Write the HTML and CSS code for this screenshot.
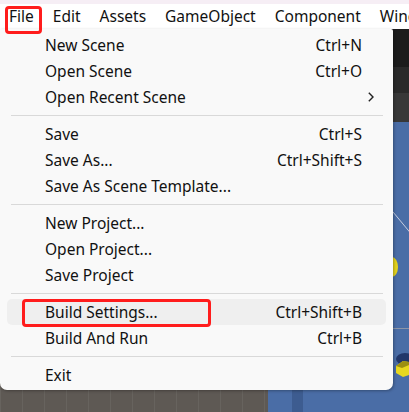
FILE: index.html
```html
<!DOCTYPE html>
<html>
<head>
<meta charset="utf-8">
<link rel="stylesheet" href="styles.css">
</head>
<body>
<div class="app">
  <div class="titlestrip"></div>
  <div class="menubar">
    <div class="mb-item mb-file">File<span class="annot annot-file"></span></div>
    <div class="mb-item">Edit</div>
    <div class="mb-item">Assets</div>
    <div class="mb-item">GameObject</div>
    <div class="mb-item">Component</div>
    <div class="mb-item">Window</div>
  </div>
  <div class="workspace">
    <div class="toolbar tb1"></div>
    <div class="toolbar tb2"></div>
    <div class="toolbar tb3"></div>
    <div class="scene">
      <div class="scene-left"></div>
      <div class="scene-right">
        <div class="scene-strip"></div>
        <svg class="gizmos" width="141" height="290" viewBox="0 0 141 290">
          <line x1="120" y1="84" x2="150" y2="120" stroke="#c6cee0" stroke-width="1"/>
          <ellipse cx="124" cy="145" rx="6" ry="10" fill="#e4d31c"/>
          <line x1="0" y1="206.5" x2="141" y2="206.5" stroke="#8c95a7" stroke-width="1"/>
          <ellipse cx="137" cy="237" rx="9" ry="6" fill="#22376a"/>
          <polygon points="128,244 135,239 141,240 141,253 135,255 128,251" fill="#e8d81e"/>
          <polygon points="128,244 135,239 141,240 141,243 134,246" fill="#9c8f12"/>
        </svg>
      </div>
    </div>
  </div>

  <div class="menu">
    <div class="row"><span class="label">New Scene</span><span class="key">Ctrl+N</span></div>
    <div class="row"><span class="label">Open Scene</span><span class="key">Ctrl+O</span></div>
    <div class="row"><span class="label">Open Recent Scene</span>
      <svg class="chev" width="6" height="10" viewBox="0 0 6 10"><path d="M0.8 0.8 L5 5 L0.8 9.2" fill="none" stroke="#222" stroke-width="1.4"/></svg>
    </div>
    <div class="sep"></div>
    <div class="row"><span class="label">Save</span><span class="key">Ctrl+S</span></div>
    <div class="row"><span class="label">Save As...</span><span class="key">Ctrl+Shift+S</span></div>
    <div class="row"><span class="label">Save As Scene Template...</span></div>
    <div class="sep"></div>
    <div class="row"><span class="label">New Project...</span></div>
    <div class="row"><span class="label">Open Project...</span></div>
    <div class="row"><span class="label">Save Project</span></div>
    <div class="sep"></div>
    <div class="row row-hover"><span class="label">Build Settings...</span><span class="key">Ctrl+Shift+B</span><span class="annot annot-build"></span></div>
    <div class="row"><span class="label">Build And Run</span><span class="key">Ctrl+B</span></div>
    <div class="sep"></div>
    <div class="row"><span class="label">Exit</span></div>
  </div>
</div>
</body>
</html>
```

FILE: styles.css
```css
html, body {
  margin: 0;
  padding: 0;
}
body {
  width: 409px;
  height: 412px;
  overflow: hidden;
  font-family: "Noto Sans", "Open Sans", sans-serif;
  color: #111;
}
.app {
  position: relative;
  width: 409px;
  height: 412px;
  overflow: hidden;
  display: flex;
  flex-direction: column;
}
.titlestrip {
  height: 4px;
  background: #f6eef5;
}
.menubar {
  height: 25px;
  background: #ffffff;
  display: flex;
  align-items: center;
  white-space: nowrap;
  font-size: 15.5px;
}
.mb-item {
  position: relative;
  padding: 0 9.5px;
  line-height: 25px;
}
.mb-file {
  padding-left: 9px;
}
.annot {
  position: absolute;
  border: 3px solid #ff1c1c;
  border-radius: 4px;
  z-index: 5;
  pointer-events: none;
}
.annot-file {
  left: 5px;
  top: 2px;
  width: 31px;
  height: 22px;
}
.workspace {
  flex: 1;
  display: flex;
  flex-direction: column;
}
.toolbar.tb1 { height: 38px; background: #1c1c1c; }
.toolbar.tb2 { height: 26px; background: #2a2a2a; }
.toolbar.tb3 { height: 29px; background: #383838; }
.scene {
  flex: 1;
  display: flex;
}
.scene-left {
  width: 268px;
  background: #5e5954;
  background-image: linear-gradient(90deg, rgba(255,255,255,0.06) 1px, transparent 1px);
  background-size: 22px 100%;
}
.scene-right {
  position: relative;
  flex: 1;
  display: flex;
  background: #4a6da6;
}
.scene-strip {
  margin-left: 24px;
  width: 11px;
  background: #3d5c90;
}
.gizmos {
  position: absolute;
  left: 0;
  top: 0;
}
.menu {
  position: absolute;
  left: 0;
  top: 29px;
  width: 393px;
  height: 361px;
  box-sizing: border-box;
  padding-top: 2.5px;
  background: #f9f9f9;
  border-radius: 0 2px 7px 7px;
  box-shadow: 1px 1px 3px rgba(0,0,0,0.3);
  z-index: 3;
  font-size: 15.5px;
}
.row {
  position: relative;
  height: 26px;
  margin: 0 7px;
  padding: 0 24px 0 38px;
  display: flex;
  align-items: center;
  justify-content: space-between;
  border-radius: 5px;
  white-space: nowrap;
}
.row-hover {
  background: #efefef;
}
.chev {
  margin-right: -12px;
}
.sep {
  height: 11px;
  display: flex;
  align-items: center;
  margin: 0 10px 0 11px;
}
.sep::before {
  content: "";
  flex: 1;
  height: 1px;
  background: #d9d9d9;
}
.annot-build {
  left: 15px;
  top: 0;
  width: 183px;
  height: 22px;
}
```
